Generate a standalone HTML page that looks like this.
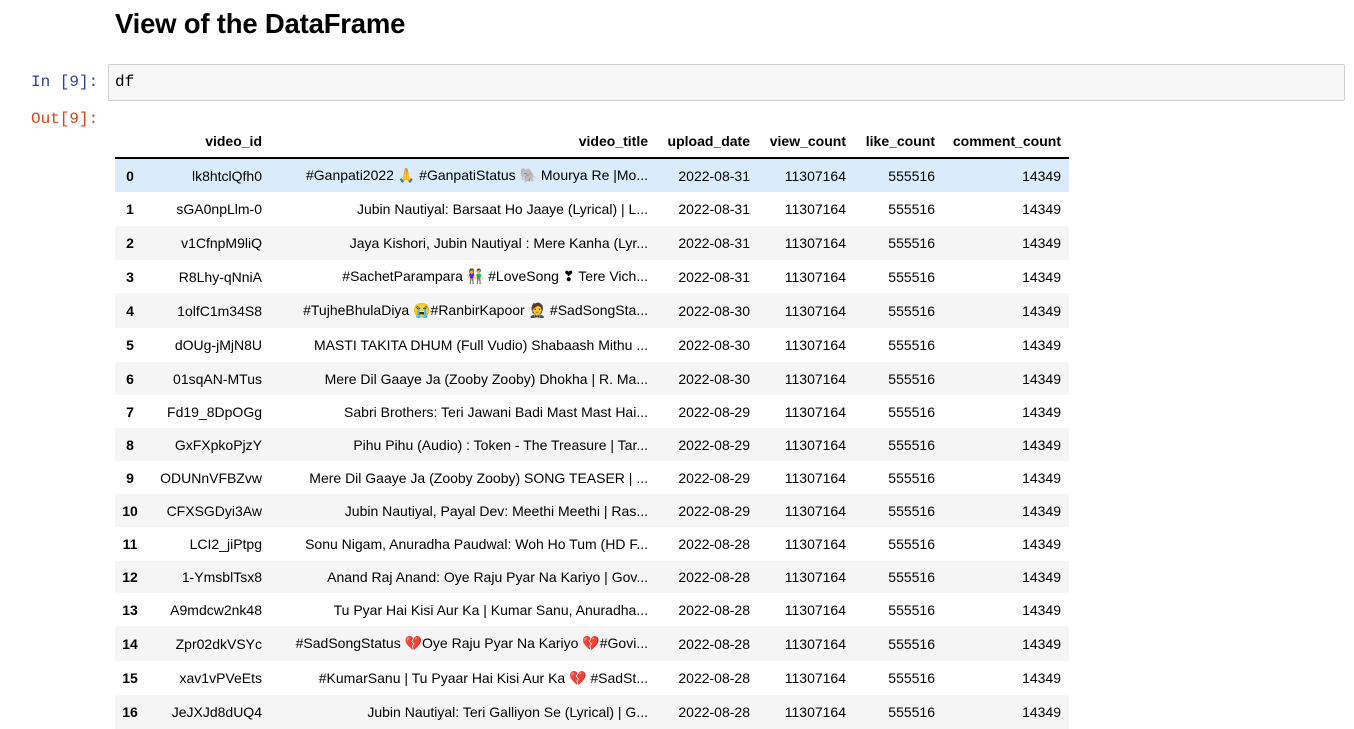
<!DOCTYPE html>
<html><head><meta charset="utf-8"><style>
body{margin:0;background:#fff;font-family:"Liberation Sans",Arial,sans-serif;width:1354px;height:725px;overflow:hidden;position:relative}
h2{position:absolute;left:115px;top:8px;margin:0;font-size:27.5px;font-weight:bold;color:#000;letter-spacing:-0.2px}
.pin{position:absolute;left:31px;top:73px;font-family:"Liberation Mono",monospace;font-size:16px;color:#303f9f}
.pout{position:absolute;left:31px;top:110px;font-family:"Liberation Mono",monospace;font-size:16px;color:#d84315}
.code{position:absolute;left:108px;top:64px;width:1237px;height:37px;background:#f7f7f7;border:1px solid #cfcfcf;border-radius:2px;font-family:"Liberation Mono",monospace;font-size:16px;line-height:35px;box-sizing:border-box;padding-left:6px}
table{position:absolute;left:115px;top:124px;border-collapse:collapse;font-size:14px;color:#000;table-layout:fixed}
th,td{text-align:right;padding:0 8px 0 0;white-space:nowrap;overflow:hidden}
thead th{height:33px;border-bottom:2px solid #000;font-weight:bold;vertical-align:middle}
tbody th{text-align:center;padding:0;font-weight:bold}
tbody tr.h{background:#daecfb}
</style></head><body>
<h2>View of the DataFrame</h2>
<div class="pin">In [9]:</div>
<div class="code">df</div>
<div class="pout">Out[9]:</div>
<table>
<colgroup><col style="width:30px"><col style="width:125px"><col style="width:386px"><col style="width:102px"><col style="width:96px"><col style="width:89px"><col style="width:126px"></colgroup>
<thead><tr><th></th><th>video_id</th><th>video_title</th><th>upload_date</th><th>view_count</th><th>like_count</th><th>comment_count</th></tr></thead>
<tbody>
<tr class="h" style="height:34px"><th>0</th><td>lk8htclQfh0</td><td>#Ganpati2022 🙏 #GanpatiStatus 🐘 Mourya Re |Mo...</td><td>2022-08-31</td><td>11307164</td><td>555516</td><td>14349</td></tr>
<tr style="height:34px;background:#fff"><th>1</th><td>sGA0npLlm-0</td><td>Jubin Nautiyal: Barsaat Ho Jaaye (Lyrical) | L...</td><td>2022-08-31</td><td>11307164</td><td>555516</td><td>14349</td></tr>
<tr style="height:34px;background:#f5f5f5"><th>2</th><td>v1CfnpM9liQ</td><td>Jaya Kishori, Jubin Nautiyal : Mere Kanha (Lyr...</td><td>2022-08-31</td><td>11307164</td><td>555516</td><td>14349</td></tr>
<tr style="height:33px;background:#fff"><th>3</th><td>R8Lhy-qNniA</td><td>#SachetParampara 👫 #LoveSong ❣ Tere Vich...</td><td>2022-08-31</td><td>11307164</td><td>555516</td><td>14349</td></tr>
<tr style="height:35px;background:#f5f5f5"><th>4</th><td>1olfC1m34S8</td><td>#TujheBhulaDiya 😭#RanbirKapoor 🤵 #SadSongSta...</td><td>2022-08-30</td><td>11307164</td><td>555516</td><td>14349</td></tr>
<tr style="height:34px;background:#fff"><th>5</th><td>dOUg-jMjN8U</td><td>MASTI TAKITA DHUM (Full Vudio) Shabaash Mithu ...</td><td>2022-08-30</td><td>11307164</td><td>555516</td><td>14349</td></tr>
<tr style="height:33px;background:#f5f5f5"><th>6</th><td>01sqAN-MTus</td><td>Mere Dil Gaaye Ja (Zooby Zooby) Dhokha | R. Ma...</td><td>2022-08-30</td><td>11307164</td><td>555516</td><td>14349</td></tr>
<tr style="height:33px;background:#fff"><th>7</th><td>Fd19_8DpOGg</td><td>Sabri Brothers: Teri Jawani Badi Mast Mast Hai...</td><td>2022-08-29</td><td>11307164</td><td>555516</td><td>14349</td></tr>
<tr style="height:33px;background:#f5f5f5"><th>8</th><td>GxFXpkoPjzY</td><td>Pihu Pihu (Audio) : Token - The Treasure | Tar...</td><td>2022-08-29</td><td>11307164</td><td>555516</td><td>14349</td></tr>
<tr style="height:33px;background:#fff"><th>9</th><td>ODUNnVFBZvw</td><td>Mere Dil Gaaye Ja (Zooby Zooby) SONG TEASER | ...</td><td>2022-08-29</td><td>11307164</td><td>555516</td><td>14349</td></tr>
<tr style="height:33px;background:#f5f5f5"><th>10</th><td>CFXSGDyi3Aw</td><td>Jubin Nautiyal, Payal Dev: Meethi Meethi | Ras...</td><td>2022-08-29</td><td>11307164</td><td>555516</td><td>14349</td></tr>
<tr style="height:34px;background:#fff"><th>11</th><td>LCI2_jiPtpg</td><td>Sonu Nigam, Anuradha Paudwal: Woh Ho Tum (HD F...</td><td>2022-08-28</td><td>11307164</td><td>555516</td><td>14349</td></tr>
<tr style="height:32px;background:#f5f5f5"><th>12</th><td>1-YmsblTsx8</td><td>Anand Raj Anand: Oye Raju Pyar Na Kariyo | Gov...</td><td>2022-08-28</td><td>11307164</td><td>555516</td><td>14349</td></tr>
<tr style="height:33px;background:#fff"><th>13</th><td>A9mdcw2nk48</td><td>Tu Pyar Hai Kisi Aur Ka | Kumar Sanu, Anuradha...</td><td>2022-08-28</td><td>11307164</td><td>555516</td><td>14349</td></tr>
<tr style="height:35px;background:#f5f5f5"><th>14</th><td>Zpr02dkVSYc</td><td>#SadSongStatus 💔Oye Raju Pyar Na Kariyo 💔#Govi...</td><td>2022-08-28</td><td>11307164</td><td>555516</td><td>14349</td></tr>
<tr style="height:34px;background:#fff"><th>15</th><td>xav1vPVeEts</td><td>#KumarSanu | Tu Pyaar Hai Kisi Aur Ka 💔 #SadSt...</td><td>2022-08-28</td><td>11307164</td><td>555516</td><td>14349</td></tr>
<tr style="height:34px;background:#f5f5f5"><th>16</th><td>JeJXJd8dUQ4</td><td>Jubin Nautiyal: Teri Galliyon Se (Lyrical) | G...</td><td>2022-08-28</td><td>11307164</td><td>555516</td><td>14349</td></tr>
</tbody></table>
</body></html>
